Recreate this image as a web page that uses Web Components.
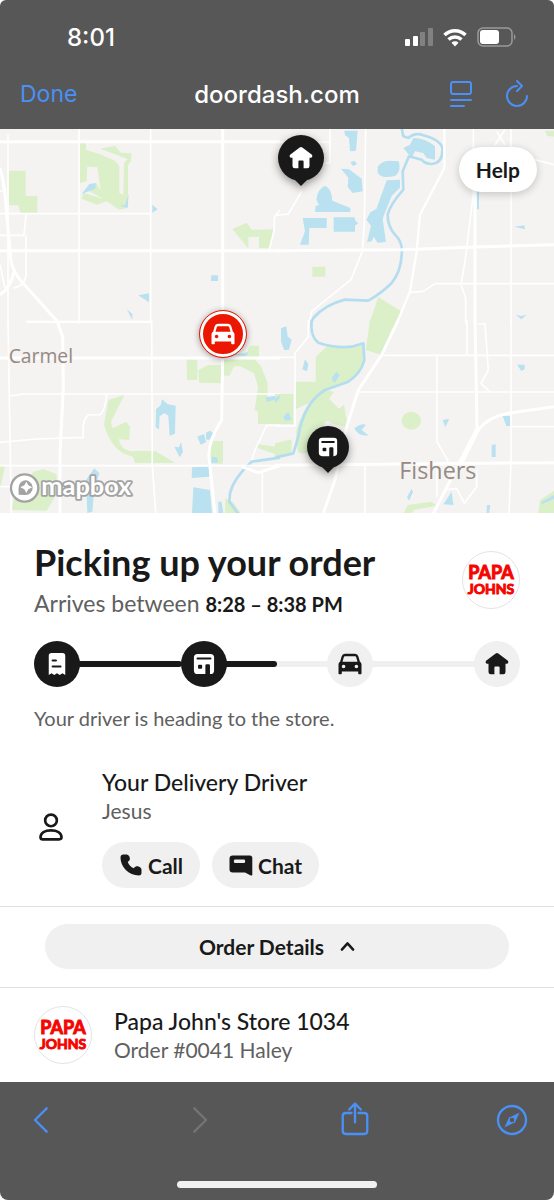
<!DOCTYPE html>
<html lang="en">
<head>
<meta charset="utf-8">
<meta name="viewport" content="width=device-width, initial-scale=1">
<title>Order tracking</title>
<style>
  body {
    margin: 0;
    background: #fff;
    color: #191919;
    font-family: Lato, "Open Sans", sans-serif;
  }
</style>
</head>
<body>
<browser-frame address="doordash.com" time="8:01">
  <delivery-map>
    <map-pin icon="home" label="Home" style="left: 54.3%; top: 6px"></map-pin>
    <map-pin icon="car" label="Driver" kind="driver" style="left: 40.2%; top: 182px"></map-pin>
    <map-pin icon="store" label="Store" style="left: 59.2%; top: 297px"></map-pin>
  </delivery-map>
  <order-status>
    <span slot="title">Picking up your order</span>
    <span slot="eta">Arrives between</span>
    <span slot="window">8:28 – 8:38 PM</span>
    <brand-logo slot="logo"></brand-logo>
    <order-progress slot="progress"></order-progress>
    <span slot="message">Your driver is heading to the store.</span>
  </order-status>
  <driver-card>
    <span slot="title">Your Delivery Driver</span>
    <span slot="name">Jesus</span>
    <pill-button slot="actions" icon="phone">Call</pill-button>
    <pill-button slot="actions" icon="chat">Chat</pill-button>
  </driver-card>
  <details-toggle>Order Details</details-toggle>
  <store-row>
    <brand-logo slot="logo"></brand-logo>
    <span slot="title">Papa John's Store 1034</span>
    <span slot="order">Order #0041 Haley</span>
  </store-row>
</browser-frame>

<script>
const define = (name, html, setup) => {
  const template = document.createElement("template");
  template.innerHTML = html;
  customElements.define(
    name,
    class extends HTMLElement {
      constructor() {
        super();
        const shadow = this.attachShadow({ mode: "open" });
        shadow.appendChild(template.content.cloneNode(true));
      }
      connectedCallback() {
        if (setup) setup(this, this.shadowRoot);
      }
    }
  );
};

const line = (width, body) =>
  `<g fill="none" stroke="currentColor" stroke-width="${width}" stroke-linecap="round" stroke-linejoin="round">${body}</g>`;

// every icon is drawn on a 24 x 24 grid
const icons = {
  home: `<path d="M10.7 1.5a2 2 0 0 1 2.6 0l9.3 7c1.4 1.2.7 3.3-1.1 3.3h-1V20a2.2 2.2 0 0 1-2.2 2.2h-3.7v-6.8a1 1 0 0 0-1-1h-3.2a1 1 0 0 0-1 1v6.8H5.7A2.2 2.2 0 0 1 3.5 20v-8.2h-1c-1.8 0-2.5-2.1-1.1-3.3z"/>`,
  car: `<path fill-rule="evenodd" d="M7 1.8h10a3.500 3.500 0 0 1 3.400 2.600l1.500 5.300c1.100.6 1.600 1.500 1.600 2.800v9a.8.8 0 0 1-.8.8H21a.8.8 0 0 1-.8-.8V19.500H3.800v2a.8.8 0 0 1-.8.8H1.300a.8.8 0 0 1-.8-.8v-9c0-1.300.5-2.200 1.600-2.800l1.500-5.300A3.500 3.500 0 0 1 7 1.800zM7 4.200a1.300 1.300 0 0 0-1.200 1L4.500 9.800h15l-1.300-4.600a1.300 1.300 0 0 0-1.200-1zM5.600 12.700a1.800 1.800 0 1 0 0 3.600 1.800 1.800 0 0 0 0-3.600zm12.800 0a1.800 1.800 0 1 0 0 3.600 1.800 1.800 0 0 0 0-3.600z"/>`,
  store: `<path fill-rule="evenodd" d="M5 1h14a4 4 0 0 1 4 4v14a4 4 0 0 1-4 4h-.5v-9.500a1.300 1.300 0 0 0-1.300-1.300h-2.400a1.300 1.300 0 0 0-1.300 1.300V23H5a4 4 0 0 1-4-4V5a4 4 0 0 1 4-4zM5 4.800a1.200 1.200 0 0 0 0 2.400h14a1.200 1.200 0 0 0 0-2.400zm1.500 8a1 1 0 0 0-1 1v2.400a1 1 0 0 0 1 1H9a1 1 0 0 0 1-1v-2.400a1 1 0 0 0-1-1z"/>`,
  receipt: `<path fill-rule="evenodd" d="M6 0h12a3 3 0 0 1 3 3v21l-3-2-3 2-3-2-3 2-3-2-3 2V3a3 3 0 0 1 3-3zM7.300 7a1.200 1.200 0 0 0 0 2.400h3.500a1.200 1.200 0 0 0 0-2.400zm0 6.500a1.200 1.200 0 0 0 0 2.400h8.500a1.200 1.200 0 0 0 0-2.400z"/>`,
  person: line(2.3, `<circle cx="12" cy="5.500" r="5"/><path d="M3 20c0-4 4-6 9-6s9 2 9 6c0 1.300-.5 1.700-2 1.700H5c-1.500 0-2-.4-2-1.700z"/>`),
  phone: `<path d="M4.500 1.500h3c1.500 0 3 1.500 3.300 3.500.3 1.700-.3 2.800-2 4 .8 2.700 3.200 5.300 6 6.300 1.200-1.700 2.500-2.200 4-2 2 .3 3.700 1.800 3.700 3.500v3.200c0 1.500-1 2.500-2.500 2.500C9.500 22.500 1.500 14 1.500 4.500c0-2 1-3 3-3z"/>`,
  chat: `<path fill-rule="evenodd" d="M3.800 2.500h17a2.500 2.500 0 0 1 2.500 2.500v16.500c0 1-.7 1.300-1.500 1L16 19.500H3.800A3.300 3.300 0 0 1 .5 16.200V5.800a3.300 3.300 0 0 1 3.300-3.300zM6.200 6.500A1.300 1.300 0 0 0 4.900 7.800v1A1.300 1.300 0 0 0 6.200 10.100h8.600a1.300 1.300 0 0 0 1.300-1.300v-1a1.300 1.300 0 0 0-1.300-1.300z"/>`,
  up: line(4, `<path d="M3 17l9-10 9 10"/>`),
  reader: line(2, `<rect x="2" y="0" width="20" height="12" rx="2"/><path d="M2 18h20M2 24h13"/>`),
  reload: line(2, `<path d="M12 4a10 10 0 1 0 10 10M12-1l5 5-5 5"/>`),
  back: line(2, `<path d="M16 2L6 12l10 10"/>`),
  forward: line(2, `<path d="M8 2l10 10L8 22"/>`),
  share: line(2, `<path d="M9 6H4a2.500 2.500 0 0 0-2.500 2.500v13A2.500 2.500 0 0 0 4 24h16a2.500 2.500 0 0 0 2.500-2.500v-13A2.500 2.500 0 0 0 20 6h-5M12 14V-2M7 3l5-5 5 5"/>`),
  compass: line(2, `<circle cx="12" cy="12" r="12"/>`) + `<path fill-rule="evenodd" d="M18.500 5.500l-3.800 8.500-9.200 4.500 3.800-8.500zM12 10a2 2 0 1 0 0 4 2 2 0 0 0 0-4z"/>`,
};

define(
  "browser-frame",
  `
  <style>
    :host { display: flex; flex-direction: column; min-height: 100vh; }
    header, footer { background: #575757; color: #fff; font-family: Inter, sans-serif; }
    header { border-radius: 6px 6px 0 0; }
    .status { display: flex; justify-content: space-between; align-items: center; height: 74px; padding: 0 38px 0 67px; }
    .time { font-size: 24px; font-weight: 500; }
    .signals { display: flex; align-items: center; gap: 10px; }
    .signals svg { display: block; }
    .bar { display: grid; grid-template-columns: 1fr auto 1fr; align-items: center; height: 40px; padding: 0 20px 15px; font-size: 24px; }
    .address { font-weight: 500; }
    button { border: 0; padding: 0; background: none; color: #4a90f5; font: inherit; }
    .bar > button { justify-self: start; font-size: 23px; }
    .tools { display: flex; justify-content: flex-end; gap: 32px; padding-right: 5px; }
    main { flex: 1; }
    footer { display: flex; flex-direction: column; align-items: center; justify-content: space-between; height: 106px; padding-bottom: 12px; border-radius: 0 0 8px 8px; }
    nav { display: flex; justify-content: space-between; align-self: stretch; padding: 24px 28px 0; }
    nav ui-icon { width: 28px; height: 28px; }
    button:disabled { color: #747474; }
    .home { width: 36%; height: 7px; border-radius: 4px; background: #f1f0f1; }
  </style>
  <header>
    <div class="status">
      <span class="time"></span>
      <div class="signals">
        <svg width="28" height="18" viewBox="0 0 28 18" fill="#fff" aria-hidden="true">
          <rect y="11" width="5" height="7" rx="1"/><rect x="8" y="8" width="5" height="10" rx="1"/>
          <g opacity=".25"><rect x="15" y="4" width="5" height="14" rx="1"/><rect x="23" width="5" height="18" rx="1"/></g>
        </svg>
        <svg width="24" height="19" viewBox="0 0 24 19" fill="none" stroke="#fff" stroke-width="3.500" aria-hidden="true">
          <path d="M1.500 7a15 15 0 0 1 21 0M5.500 11.500a9.500 9.500 0 0 1 13 0"/><path d="M12 18.500l-3.500-3.700a5 5 0 0 1 7 0z" fill="#fff" stroke="none"/>
        </svg>
        <svg width="39" height="20" viewBox="0 0 39 20" fill="none" aria-hidden="true">
          <rect x="1" y="1" width="34" height="18" rx="5" stroke="#9a9a9a" stroke-width="1.500"/>
          <rect x="3" y="3" width="19" height="14" rx="3" fill="#fff"/><path d="M37 7q3 3 0 6z" fill="#9a9a9a"/>
        </svg>
      </div>
    </div>
    <div class="bar">
      <button type="button">Done</button>
      <span class="address"></span>
      <div class="tools">
        <button type="button" aria-label="Reader"><ui-icon name="reader"></ui-icon></button>
        <button type="button" aria-label="Reload"><ui-icon name="reload"></ui-icon></button>
      </div>
    </div>
  </header>
  <main><slot></slot></main>
  <footer>
    <nav>
      <button type="button" aria-label="Back"><ui-icon name="back"></ui-icon></button>
      <button type="button" aria-label="Forward" disabled><ui-icon name="forward"></ui-icon></button>
      <button type="button" aria-label="Share"><ui-icon name="share"></ui-icon></button>
      <button type="button" aria-label="Open in Safari"><ui-icon name="compass"></ui-icon></button>
    </nav>
    <div class="home"></div>
  </footer>
`,
  (el, root) => {
    root.querySelector(".time").textContent = el.getAttribute("time");
    root.querySelector(".address").textContent = el.getAttribute("address");
  }
);

// the map is drawn in four tiles, three units to the pixel
define(
  "delivery-map",
  `
  <style>
    :host { display: block; position: relative; height: 384px; overflow: hidden; background: #f4f3f2; }
    svg { display: block; width: 100%; height: 100%; }
    .park { fill: #dbf0c9; }
    .water { fill: #b9e1f0; }
    .river { fill: none; stroke: #b4deef; stroke-width: 8; stroke-linejoin: round; }
    .road { fill: none; stroke: #fff; stroke-width: 5; stroke-linejoin: round; }
    .main { stroke-width: 9; }
    text { font-family: "Open Sans", sans-serif; fill: #968a84; stroke: #f4f3f2; stroke-width: 6; paint-order: stroke; }
    .brand { font-family: Lato, sans-serif; font-weight: 700; font-size: 76px; fill: #fff; stroke: #a3a3a3; stroke-width: 11; stroke-linejoin: round; }
    button {
      position: absolute; top: 18px; right: 17px; height: 45px; padding: 0 17px; border: 0; border-radius: 23px;
      background: #fff; color: #191919; font: 700 21px Lato, sans-serif; box-shadow: 0 2px 8px rgba(0, 0, 0, 0.2);
    }
  </style>
  <svg viewBox="0 0 1662 1152" preserveAspectRatio="xMidYMid slice" role="img" aria-label="Map of Carmel and Fishers">
    <g transform="translate(0 -3)">
      <path class="park" d="M27 128H77V204H112V255H62L55 232H27zM240 45h18v20l40 13 47 20 13 17v80l12 6 2-96 11-12-83-31 45-9 17 21 33 2-2 24-9 12v88l-4 40-22 5-38-25-30 10-45-18 5-17 60 17-45-24 25-23 12 23-10-70-30-2-2 44-20 5zM697 303l43-19 15 21 68-1-15 57h-31v-35l-32 2v34z"/>
      <path class="water" d="M245 198l23-30 20-3-2 17zM358 232h17l11-35-3 43zM457 230l16 14-16 10zM634 442h20v17h-21zM415 502l32-6v27zM380 543l17 15v17z"/>
      <path class="road" d="M24 20V587M237 0V587M452 0V587M0 257H455M80 581H455M78 260L72 322H0M78 322V440Q75 475 40 480M840 245L823 268V303L808 365M0 410L15 480M0 190L20 182"/>
      <path class="road main" d="M0 41H840M668 0V587M0 368H840M0 120Q15 170 20 260L33 400Q40 430 60 455L178 587M42 430Q32 480 0 500"/>
    </g>
    <g transform="translate(825 -3)">
      <path class="park" d="M112 416h39v30h-39zM310 507l67 42-15 40h-80zM810 8h27v18l-20-2z"/>
      <path class="water" d="M208 8h40l-5 60-18 2-3-40-12-8zM226 103l12-5 8 10-12 6zM198 122l24 2 38 28 3 38-30 5-15-18 2-28zM308 118q10-20 35-20l28 2q8 30-10 43-40 12-53-9zM335 157l40-2v24l-25 25-22 55-5 15 10 68-25 2-12-18-5 13-15 4 12-50-14-18 12-22 18-10zM150 173q20 8 22 45l54 22v12H120l2-18 10-3-8-16q5-34 26-42zM83 270h72v30h-52l-2 50H75l15-40zM176 268h62l4 12 8 5-10 8v18h-64zM385 60l20-10 10-20q35 0 65 25v40l-25-5-10-15-25-5-10 20-15-18zM606 190h6v54h-6zM718 296l30-4 2 12zM722 560l15 4 18-4-16 14z"/>
      <path class="river" d="M380 0l5 25 15 5q20-18 45-8 50 13 57 38 3 45-32 48-20 0-30-13l-38-10-19 45 2 55q-40 45-47 75 0 35 22 60 25 25 20 60-2 50-30 85-30 30-70 53l-70-3q-60 15-95 55l-8 17"/>
      <path class="road" d="M272 0L268 290L262 370L228 455L110 550L103 587M595 0V200L570 400L558 470L572 510V587M708 0V587M405 493L445 490L480 467H837M165 0V105H100M0 42H165M80 190L40 258L0 262M665 10L690 50M690 5L660 50M780 95L837 110"/>
      <path class="road main" d="M0 368L380 365L600 357L837 350M600 190V587"/>
      <path class="road main" style="stroke-width: 7" d="M508 0V120L435 260L425 370L405 490L365 587"/>
    </g>
    <g transform="translate(0 573)">
      <path class="park" d="M560 117l32 2v61h-31zM595 150l30-15h40v55l-68-2zM673 115h28l40-16 8-22h28v32l-13 8 20 23 19 50v45l36 5v72h-65V275l-10-5 10-70-12-40-43-22-18 2-12 27h-28zM325 240l48-15-40 80 5 20 40-20 12 15-2 40-32-2q10 40 50 35h60l60 36H405l-8-20q-60-10-85-95zM0 438h15L0 510zM100 455l30-8 40 15v60l-30 50-105-2 10-50zM637 363h32v68h-35l-6-28zM770 372l70 10v25l-65-22zM676 535l22 10 25 35h-48z"/>
      <path class="water" d="M468 268l14-12 4-18 16 14 25 5-2 84-16 6-4-60-12-8-14 10-2 40-10-8zM523 380l14 2 6-16 6 30-10 16zM592 350l20-8 6 25-16 7zM618 338l12-6 10 8-12 20-10-2zM576 442l50-2 2 30-53 4zM580 502l50 8 6 70h-60zM636 410l15 2 4 16h-22zM258 480l25-35 15 15-15 45-6 70-15 4zM655 545l10 0 5 35h-15zM700 105l44-8-4 12zM797 232l43-6v8l-40 12z"/>
      <path class="river" d="M840 413L755 425Q700 475 690 520L688 545L715 582"/>
      <path class="road" d="M24 0L34 580M455 0L457 437L467 580M80 6H455M30 228L70 222H840M0 367L110 357L250 352Q245 300 265 285L300 284Q315 275 320 222M0 437H840M840 316H800L765 390L755 420M787 450V580M0 500H30"/>
      <path class="road main" d="M0 114H840M170 0L188 50L190 200L180 400V580M668 110L665 300Q620 370 628 420L645 580M725 440L775 458L840 437"/>
      <text x="26" y="129" font-size="58">Carmel</text>
      <circle cx="74" cy="504" r="41" fill="#fff" stroke="#a3a3a3" stroke-width="7"/>
      <path fill="#a3a3a3" fill-rule="evenodd" d="M56 524q-4-38 14-42a22 22 0 1 1 4 43zM79 485l6 11 12 6-12 6-6 11-6-11-12-6 12-6z"/>
      <text class="brand" x="124" y="526">mapbox</text>
    </g>
    <g transform="translate(825 573)">
      <path class="park" d="M285 0h82l-47 105-48-15zM122 110l35-32q60 15 108-5l2 50q-10 45-50 65l-65 20 25 8-15 20 30 30 15-12 12 70-50-14q-15-20-25 10 0 60-40 80H75Q60 395 64 330q20-60 40-82l-42 20v-83h60zM0 222h55v90H0zM0 370l50-12v40L0 410zM438 302m-58 0a28 26 0 1 0 58 0 28 26 0 1 0-58 0M386 580l12-25 70-10 20 12-70 12-10 11zM790 580l5-40 42-28v68z"/>
      <path class="water" d="M18 25l16-6 4 30 12 10-8 30-14 2-10-26zM90 118l10 14-4 22-14-6zM172 170l12-14 10 8-12 22-10-2zM238 325q25-18 34-10l-12 15 20 16q-30 5-42-21zM503 300l20-4-12 26zM726 134h23v14l-10 5zM683 288h23v30h-12zM650 375l12-2v38h-12zM410 506l4 10-12 26-6-10zM505 553l25-38 5 40zM636 555h10l-4 28h-8zM25 290l15-14 10 24-20 2zM0 235l14-10v10L0 250zM800 545l37-20v12l-37 16z"/>
      <path class="river" d="M110 0Q105 50 130 68Q180 85 230 80L265 70L268 120Q258 160 220 185L150 210Q85 250 70 350L55 400L0 413"/>
      <path class="road" d="M100 0V50L60 100V318H0M0 112H60M325 106H837M250 216H837M486 106V365L520 425M486 430V530M576 0V105M610 12H630L640 150L618 190L645 216M708 0V430L702 580M708 320H837M270 437V580M510 510L545 505L568 550L605 500V450"/>
      <path class="road main" d="M600 0L606 325L475 580M0 436L837 428M560 430L610 330Q640 290 700 280L837 260"/>
      <path class="road main" d="M370 0L320 105L250 210L215 320L180 480L145 580"/>
      <text x="373" y="477" font-size="70">Fishers</text>
    </g>
  </svg>
  <slot></slot>
  <button type="button">Help</button>
`
);

define(
  "map-pin",
  `
  <style>
    :host { position: absolute; width: 0; }
    .dot {
      position: relative; display: grid; place-items: center; box-sizing: border-box; width: 46px; height: 46px; margin-left: -23px;
      border-radius: 50%; background: #191919; color: #fff; filter: drop-shadow(0 3px 4px rgba(0, 0, 0, 0.4));
    }
    .dot::after { content: ""; position: absolute; top: 98%; border: 6px solid transparent; border-top: 6px solid #191919; border-bottom: 0; }
    :host([kind="driver"]) .dot { background: #eb1700; border: 3px solid #fff; outline: 1px solid #eb1700; filter: drop-shadow(0 1px 3px rgba(0, 0, 0, 0.4)); }
    :host([kind="driver"]) .dot::after { display: none; }
    :host([icon="store"]) .dot { width: 42px; height: 42px; margin-left: -21px; }
    :host([icon="store"]) ui-icon { width: 20px; height: 20px; }
  </style>
  <div class="dot" role="img"><ui-icon></ui-icon></div>
`,
  (el, root) => {
    root.querySelector(".dot").setAttribute("aria-label", el.getAttribute("label"));
    root.querySelector("ui-icon").setAttribute("name", el.getAttribute("icon"));
  }
);

define(
  "brand-logo",
  `
  <style>
    :host { display: block; flex: none; }
    .logo {
      display: flex; flex-direction: column; align-items: center; justify-content: center; box-sizing: border-box; width: 58px; height: 58px;
      border: 1px solid #e4e4e4; border-radius: 50%; background: #fff; color: #f50500;
      font: 700 18px/17px Lato, sans-serif; -webkit-text-stroke: 1px #f50500;
    }
    .logo :last-child { font-size: 14px; line-height: 15px; }
  </style>
  <div class="logo"><span>PAPA</span><span>JOHNS</span></div>
`
);

define(
  "order-status",
  `
  <style>
    :host { display: block; padding: 28px 34px 0; }
    .top { display: flex; justify-content: space-between; align-items: center; gap: 16px; }
    h1 { margin: 0; font-size: 36px; line-height: 42px; font-weight: 700; }
    p { margin: 0; color: #606060; }
    .eta { margin-top: 6px; font-size: 23px; line-height: 28px; }
    .eta b { color: #191919; font-size: 20px; }
    ::slotted([slot="progress"]) { margin: 23px 0 18px; }
    .message { font-size: 20px; line-height: 26px; }
  </style>
  <div class="top">
    <div>
      <h1><slot name="title"></slot></h1>
      <p class="eta"><slot name="eta"></slot> <b><slot name="window"></slot></b></p>
    </div>
    <slot name="logo"></slot>
  </div>
  <slot name="progress"></slot>
  <p class="message"><slot name="message"></slot></p>
`
);

define(
  "order-progress",
  `
  <style>
    :host { display: flex; align-items: center; }
    .step { display: grid; place-items: center; flex: none; width: 46px; height: 46px; border-radius: 50%; background: #f0f0f0; }
    .step.done { background: #191919; color: #fff; }
    .step.done ui-icon { width: 22px; height: 22px; }
    .track { flex: 1; height: 6px; margin: 0 -1px; background: #f0f0f0; }
    .track i { display: block; height: 100%; border-radius: 0 3px 3px 0; background: #191919; }
  </style>
  <div class="step done"><ui-icon name="receipt"></ui-icon></div>
  <div class="track"><i style="width: 100%"></i></div>
  <div class="step done"><ui-icon name="store"></ui-icon></div>
  <div class="track"><i style="width: 50%"></i></div>
  <div class="step"><ui-icon name="car"></ui-icon></div>
  <div class="track"></div>
  <div class="step"><ui-icon name="home"></ui-icon></div>
`
);

define(
  "pill-button",
  `
  <style>
    :host { display: block; }
    button {
      display: flex; align-items: center; gap: 5px; height: 46px; padding: 0 17px; border: 0; border-radius: 23px;
      background: #f0f0f0; color: #191919; font: 700 21px Lato, sans-serif;
    }
  </style>
  <button type="button"><ui-icon></ui-icon><slot></slot></button>
`,
  (el, root) => {
    root.querySelector("ui-icon").setAttribute("name", el.getAttribute("icon"));
  }
);

define(
  "driver-card",
  `
  <style>
    :host { display: flex; align-items: center; gap: 34px; padding: 36px 34px 18px; border-bottom: 1px solid #e0e0e0; }
    ui-icon { width: 28px; height: 28px; padding: 0 3px; }
    h2, p { margin: 0; }
    h2 { font-size: 23px; line-height: 30px; font-weight: 500; }
    p { color: #606060; font-size: 21px; line-height: 28px; }
    .actions { display: flex; gap: 12px; margin-top: 17px; }
  </style>
  <ui-icon name="person"></ui-icon>
  <div>
    <h2><slot name="title"></slot></h2>
    <p><slot name="name"></slot></p>
    <div class="actions"><slot name="actions"></slot></div>
  </div>
`
);

define(
  "details-toggle",
  `
  <style>
    :host { display: block; padding: 17px 45px 18px; border-bottom: 1px solid #e0e0e0; }
    button {
      display: flex; align-items: center; justify-content: center; gap: 16px; width: 100%; height: 45px; padding: 0; border: 0; border-radius: 23px;
      background: #f0f0f0; color: #191919; font: 700 21px Lato, sans-serif;
    }
    ui-icon { width: 15px; height: 15px; }
  </style>
  <button type="button" aria-expanded="true"><slot></slot><ui-icon name="up"></ui-icon></button>
`
);

define(
  "store-row",
  `
  <style>
    :host { display: flex; align-items: center; gap: 22px; padding: 18px 34px; }
    h2, p { margin: 0; }
    h2 { font-size: 23px; line-height: 30px; font-weight: 500; }
    p { color: #606060; font-size: 21px; line-height: 28px; }
  </style>
  <slot name="logo"></slot>
  <div>
    <h2><slot name="title"></slot></h2>
    <p><slot name="order"></slot></p>
  </div>
`
);

// defined last: pins and buttons have passed on their icon names by now
define(
  "ui-icon",
  `
  <style>
    :host { display: block; flex: none; width: 24px; height: 24px; }
    svg { display: block; width: 100%; height: 100%; overflow: visible; fill: currentColor; }
  </style>
  <svg viewBox="0 0 24 24" aria-hidden="true"></svg>
`,
  (el, root) => {
    root.querySelector("svg").innerHTML = icons[el.getAttribute("name")];
  }
);
</script>
</body>
</html>
